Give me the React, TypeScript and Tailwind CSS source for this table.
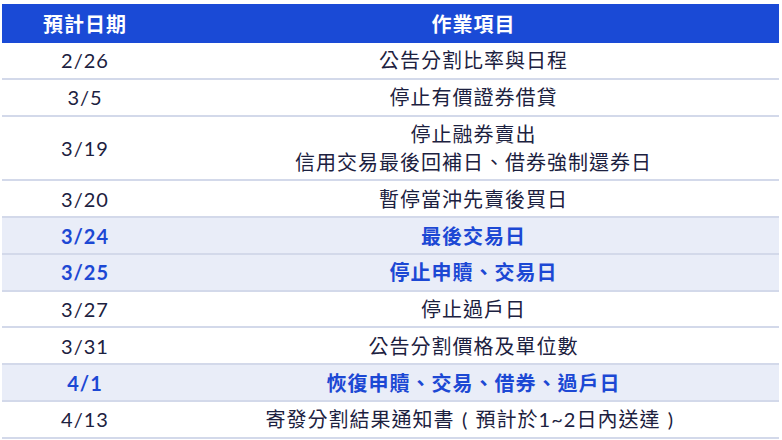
import React from "react";

type Row = { date: string; lines: React.ReactNode[]; hi?: boolean };

const P = ({ c }: { c: string }) => (
  <span className="inline-block w-[21px] text-center">{c}</span>
);

const rows: Row[] = [
  { date: "2/26", lines: ["公告分割比率與日程"] },
  { date: "3/5", lines: ["停止有價證券借貸"] },
  { date: "3/19", lines: ["停止融券賣出", "信用交易最後回補日、借券強制還券日"] },
  { date: "3/20", lines: ["暫停當沖先賣後買日"] },
  { date: "3/24", lines: ["最後交易日"], hi: true },
  { date: "3/25", lines: ["停止申贖、交易日"], hi: true },
  { date: "3/27", lines: ["停止過戶日"] },
  { date: "3/31", lines: ["公告分割價格及單位數"] },
  { date: "4/1", lines: ["恢復申贖、交易、借券、過戶日"], hi: true },
  {
    date: "4/13",
    lines: [
      <>
        寄發分割結果通知書<P c="(" />預計於1~2日內送達<P c=")" />
      </>,
    ],
  },
];

export default function App() {
  return (
    <div
      lang="zh-TW"
      className="w-[782px] h-[440px] bg-white pt-[4px] pl-[2px] pr-[3px] overflow-hidden"
      style={{ fontFamily: '"Lato", "Noto Sans CJK TC", sans-serif' }}
    >
      <div className="w-[777px]">
        <div className="flex h-[39px] bg-[#1a4ad6] text-white font-bold text-[20px] tracking-[1px] items-center">
          <div className="w-[166px] text-center">預計日期</div>
          <div className="flex-1 text-center">作業項目</div>
        </div>
        {rows.map((r) => (
          <div
            key={r.date}
            className={
              r.hi
                ? "flex items-center border-b-2 border-[#d3d9ea] bg-[#e9edf8] text-[#1c48d4] font-bold text-[20px] leading-[28px] tracking-[1px]"
                : "flex items-center border-b-2 border-[#d3d9ea] bg-white text-[#1c2140] text-[20px] leading-[28px] tracking-[1px]"
            }
          >
            <div className="w-[166px] text-center py-[3.4px]">{r.date}</div>
            <div className="flex-1 text-center py-[3.4px]">
              {r.lines.map((l, i) => (
                <div key={i}>{l}</div>
              ))}
            </div>
          </div>
        ))}
      </div>
    </div>
  );
}
